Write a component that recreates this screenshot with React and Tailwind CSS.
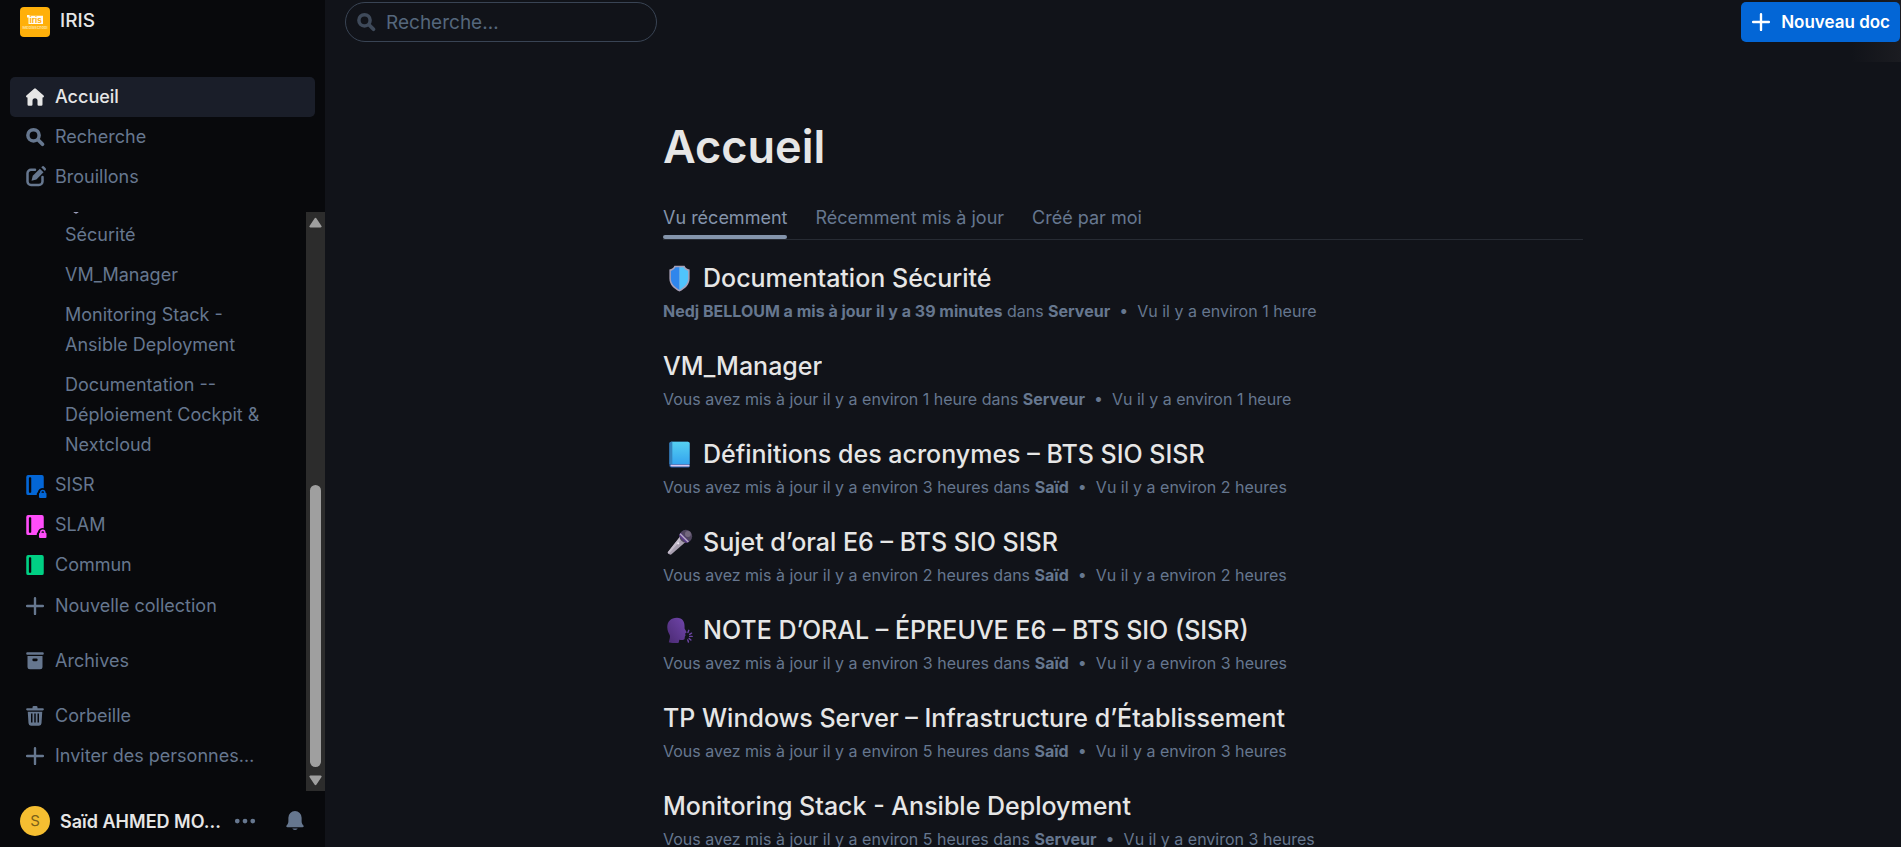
import React from "react";

function Icon({ children, className = "" }) {
  return (
    <svg viewBox="0 0 24 24" className={`h-[30px] w-[30px] shrink-0 ${className}`} fill="currentColor" aria-hidden="true">
      {children}
    </svg>
  );
}

const HomeIcon = () => (
  <Icon>
    <path d="M11.3 5.3a1 1 0 0 1 1.4 0l6.2 5.5c.6.6.2 1.6-.6 1.6H18V18a1 1 0 0 1-1 1h-2a1 1 0 0 1-1-1v-3a2 2 0 0 0-4 0v3a1 1 0 0 1-1 1H7a1 1 0 0 1-1-1v-5.6h-.3c-.8 0-1.2-1-.6-1.6z" />
  </Icon>
);

const SearchIcon = ({ className }) => (
  <Icon className={className}>
    <circle cx="10.8" cy="10.6" r="4.5" fill="none" stroke="currentColor" strokeWidth="2.8" />
    <path d="M14.6 14.4 18 17.8" stroke="currentColor" strokeWidth="3" strokeLinecap="round" />
  </Icon>
);

const DraftIcon = () => (
  <Icon>
    <path d="M12 6.200H8.800A2.800 2.800 0 0 0 6 9v6.500a2.800 2.800 0 0 0 2.800 2.800h6.400a2.800 2.800 0 0 0 2.800-2.800V12" fill="none" stroke="currentColor" strokeWidth="2" strokeLinecap="round" />
    <path d="m15.900 5.300 2.900 2.900-5.700 5.700-3.900 1.100 1-4z" />
    <path d="m17 4.200.5-.5a1.300 1.300 0 0 1 1.900 0l1 1a1.300 1.300 0 0 1 0 1.900l-.5.500z" />
  </Icon>
);

const PlusIcon = () => (
  <Icon>
    <path d="M12 5.700v12.600M5.700 12h12.600" stroke="currentColor" strokeWidth="1.900" strokeLinecap="round" />
  </Icon>
);

const ArchiveIcon = () => (
  <Icon>
    <rect x="5" y="5" width="14" height="2" rx="0.800" />
    <path fillRule="evenodd" d="M6 8h12v8.500a2 2 0 0 1-2 2H8a2 2 0 0 1-2-2zm4.800 2a.9.9 0 0 0-.9.9v.3c0 .5.400.9.900.9h2.400c.5 0 .9-.4.900-.9v-.3a.9.900 0 0 0-.9-.9z" />
  </Icon>
);

const TrashIcon = () => (
  <Icon>
    <path d="M10 5a1 1 0 0 1 1-1h2a1 1 0 0 1 1 1v.700h4.200a.9.900 0 0 1 0 1.800H5.800a.9.900 0 0 1 0-1.800H10z" />
    <path fillRule="evenodd" d="M6.200 8.500h11.600l-.6 9.300a2 2 0 0 1-2 1.900H8.800a2 2 0 0 1-2-1.900zM8.800 10v7.200h1.200V10zm2.600 0v7.200h1.200V10zm2.600 0v7.200h1.200V10z" />
  </Icon>
);

const BellIcon = () => (
  <Icon>
    <path d="M12 4a5.300 5.300 0 0 0-5.300 5.300v2.900c0 1.400-.5 2.300-1.300 3.200-.7.800-.3 1.600.6 1.600h12c.9 0 1.300-.8.600-1.600-.8-.9-1.300-1.800-1.300-3.200V9.300A5.300 5.300 0 0 0 12 4zM9.800 18h4.400a2.300 1.600 0 0 1-4.400 0z" />
  </Icon>
);

const DotsIcon = () => (
  <Icon>
    <circle cx="5.800" cy="12" r="1.900" />
    <circle cx="12" cy="12" r="1.900" />
    <circle cx="18.200" cy="12" r="1.900" />
  </Icon>
);

function CollectionIcon({ className, locked }) {
  return (
    <Icon className={className}>
      <path
        fillRule="evenodd"
        d={
          locked
            ? "M6.500 4h11A1.500 1.500 0 0 1 19 5.500v9a4.600 4.600 0 0 0-4.800 3.200c-.5.300-.8.900-.8 1.500v.8H6.500A1.500 1.500 0 0 1 5 18.500v-13A1.500 1.500 0 0 1 6.500 4zm1.300 1.800a.7.700 0 0 0-.7.700v11c0 .4.300.7.700.700h.5c.4 0 .7-.3.700-.7v-11a.7.700 0 0 0-.7-.7z"
            : "M6.500 4h11A1.500 1.500 0 0 1 19 5.500v13a1.500 1.500 0 0 1-1.500 1.500h-11A1.500 1.500 0 0 1 5 18.500v-13A1.500 1.500 0 0 1 6.500 4zm1.300 1.800a.7.700 0 0 0-.7.700v11c0 .4.300.7.700.700h.5c.4 0 .7-.3.700-.7v-11a.7.700 0 0 0-.7-.7z"
        }
      />
      {locked && (
        <>
          <rect x="15.200" y="18.200" width="6" height="4.200" rx="0.800" />
          <path d="M16.600 18.500v-.6a1.600 1.600 0 0 1 3.200 0v.6" fill="none" stroke="currentColor" strokeWidth="1.200" />
        </>
      )}
    </Icon>
  );
}

function ShieldEmoji({ className }) {
  return (
    <svg viewBox="0 0 32 32" className={className} aria-hidden="true">
      <path d="M10 1h12c1 2.600 3 4 6 4.400V16c0 7-5 12-12 15.500C9 28 4 23 4 16V5.400C7 5 9 3.600 10 1z" fill="#a7a0b8" />
      <path d="M11 2.800h5v26.700C10 26 5.800 22 5.800 16V7C8.500 6.300 10 5 11 2.800z" fill="#2f86ec" />
      <path d="M21 2.800h-5v26.700c6-3.500 10.200-7.500 10.200-13.500V7C23.500 6.300 22 5 21 2.800z" fill="#50c4fc" />
    </svg>
  );
}

function BookEmoji({ className }) {
  return (
    <svg viewBox="0 0 32 32" className={className} aria-hidden="true">
      <defs>
        <linearGradient id="book-cover" x1="0" y1="0" x2="0" y2="1">
          <stop offset="0" stopColor="#55d0f2" />
          <stop offset="1" stopColor="#35a4ee" />
        </linearGradient>
      </defs>
      <path d="M6 1h20a2 2 0 0 1 2 2v27a1.500 1.500 0 0 1-1.500 1.500H6.500A2.500 2.500 0 0 1 4 29V3a2 2 0 0 1 2-2z" fill="#2b63ae" />
      <path d="M5.500 28h22.300v2.200H6.600A1.500 1.500 0 0 1 5.500 28z" fill="#dcc8ee" />
      <path d="M6.500 1H26a2 2 0 0 1 2 2v24.300H6.500z" fill="url(#book-cover)" />
      <path d="M6 1h1.500v26.300H4V3a2 2 0 0 1 2-2z" fill="#3583bd" />
    </svg>
  );
}

function MicEmoji({ className }) {
  return (
    <svg viewBox="0 0 32 32" className={className} aria-hidden="true">
      <path d="M17 8.500 23.500 15 6.500 30c-1.500 1.300-5.500-1-4.300-2.700z" fill="#a79eaf" />
      <path d="M17 8.500 19.500 11 3.500 29c-1-.3-1.700-1-1.100-1.700z" fill="#c4bcca" />
      <circle cx="23.500" cy="8.500" r="7.500" fill="#50465f" />
      <circle cx="26" cy="6" r="3.500" fill="#73687e" />
      <path d="m17.500 4.300 10.200 10.200c-1.200 1.300-3 1.800-4.200 1.800L15.700 8.500c0-1.600.6-3.200 1.800-4.200z" fill="#5b3a8c" />
      <path d="m16.600 5.600 9.900 9.900" stroke="#b9afc4" strokeWidth="1.600" />
      <circle cx="14.500" cy="17" r="1.300" fill="#eee8f2" />
    </svg>
  );
}

function SpeakingEmoji({ className }) {
  return (
    <svg viewBox="0 0 32 32" className={className} aria-hidden="true">
      <defs>
        <linearGradient id="head-fill" x1="0" y1="1" x2="1" y2="0">
          <stop offset="0" stopColor="#4a2a72" />
          <stop offset="1" stopColor="#7146ac" />
        </linearGradient>
      </defs>
      <path d="M13 1C5.500 1 1.500 5.800 1.500 12c0 4.500 2 7.500 3 9.500.8 2-.4 5-1.200 8.500.7 1 9 1.300 11.700.5l.8-3.500c2.500.3 5.200.5 6-.6.8-1 .2-2.400.6-3.300.4-.8 1-1.500.6-2.200l-.5-1.200c1.500-.6 2.200-1.200 1.700-2.200L22 13.600C22.600 5.500 19.500 1 13 1z" fill="url(#head-fill)" />
      <path d="m26 18.500 1-2.700M28 20.500l2.300-1.300M28 23h3M27.500 25.500l2 1.800M25.800 27.200l.8 2.500" stroke="#6c45a3" strokeWidth="1.700" strokeLinecap="round" />
    </svg>
  );
}

function NavItem({ icon, label, active }) {
  return (
    <a
      href="#"
      aria-current={active ? "page" : undefined}
      className={`flex items-center gap-[5px] rounded-[5px] px-[10px] py-[5px] leading-[30px] ${
        active ? "bg-[#1a1e29] font-medium text-[#e6e6e6]" : "text-[#66778f]"
      }`}
    >
      {icon}
      <span className="truncate">{label}</span>
    </a>
  );
}

function DocLink({ children }) {
  return (
    <a href="#" className="block py-[5px] pl-[55px] pr-[40px] leading-[30px]">
      {children}
    </a>
  );
}

function Sidebar() {
  return (
    <aside className="flex w-[325px] shrink-0 flex-col bg-[#08090c] text-[18px] text-[#66778f]">
      <button type="button" className="flex items-start gap-[10px] px-5 pt-[7px] text-[19px] font-medium leading-7 text-[#e6e6e6]">
        <svg viewBox="0 0 30 30" className="h-[30px] w-[30px]" aria-hidden="true">
          <rect width="30" height="30" rx="4" fill="#ffb00a" />
          <path d="M7 8h2.500v.8H23V17H8.500v-6.500H7z" fill="#fffaf0" />
          <text x="15.600" y="15.800" textAnchor="middle" fontSize="8" fontWeight="700" fontFamily="Inter, sans-serif" fill="#ffb00a">iris</text>
          <text x="15" y="22.300" textAnchor="middle" fontSize="4" fontWeight="600" fontFamily="Inter, sans-serif" fill="#ffe3a0">MediaSchool</text>
        </svg>
        <span>IRIS</span>
      </button>

      <nav aria-label="Principal" className="px-[10px] pb-[15px] pt-10">
        <NavItem icon={<HomeIcon />} label="Accueil" active />
        <NavItem icon={<SearchIcon />} label="Recherche" />
        <NavItem icon={<DraftIcon />} label="Brouillons" />
      </nav>

      <div className="flex min-h-0 flex-1">
        <nav aria-label="Collections" className="flex min-w-0 flex-1 flex-col justify-end gap-[15px] overflow-hidden pb-[15px] pl-[10px]">
          <div className="flex flex-col gap-px">
            <div>
              <DocLink>
                <ShieldEmoji className="mr-1 inline-block h-[19px] w-[22px] align-[-3px]" />
                Documentation Sécurité
              </DocLink>
              <DocLink>VM_Manager</DocLink>
              <DocLink>Monitoring Stack - Ansible Deployment</DocLink>
              <DocLink>Documentation -- Déploiement Cockpit &amp; Nextcloud</DocLink>
              <NavItem icon={<CollectionIcon locked className="overflow-visible text-[#0366d6]" />} label="SISR" />
              <NavItem icon={<CollectionIcon locked className="overflow-visible text-[#ff4dfa]" />} label="SLAM" />
              <NavItem icon={<CollectionIcon className="text-[#00d084]" />} label="Commun" />
            </div>
            <NavItem icon={<PlusIcon />} label="Nouvelle collection" />
          </div>
          <NavItem icon={<ArchiveIcon />} label="Archives" />
          <div>
            <NavItem icon={<TrashIcon />} label="Corbeille" />
            <NavItem icon={<PlusIcon />} label="Inviter des personnes…" />
          </div>
        </nav>
        <div aria-hidden="true" className="flex w-[19px] flex-col items-center justify-between bg-[#2c2c2c] py-[5px] text-[#9f9f9f]">
          <svg viewBox="0 0 13 11" className="h-[11px] w-[13px]" fill="currentColor">
            <path d="M5.500 1.500a1.200 1.200 0 0 1 2 0l5 7.500a1 1 0 0 1-1 1.500h-10a1 1 0 0 1-1-1.500z" />
          </svg>
          <div className="flex w-[11px] flex-1 flex-col py-2">
            <div className="flex-[249_1_0%]" />
            <div className="flex-[283_1_0%] rounded-full bg-[#9f9f9f]" />
          </div>
          <svg viewBox="0 0 13 11" className="h-[11px] w-[13px]" fill="currentColor">
            <path d="M5.500 9.500a1.200 1.200 0 0 0 2 0l5-7.500a1 1 0 0 0-1-1.500h-10a1 1 0 0 0-1 1.500z" />
          </svg>
        </div>
      </div>

      <div className="flex items-center justify-between px-[15px] pb-[11px] pt-[15px]">
        <button type="button" className="flex min-w-0 items-center pl-[5px] font-semibold text-[#e6e6e6]">
          <span className="mr-[10px] flex h-[30px] w-[30px] shrink-0 items-center justify-center rounded-full bg-[#f5be31] text-[15px] font-normal text-[#7b6019]">S</span>
          <span className="w-[170px] truncate text-left">Saïd AHMED MO…</span>
          <span className="text-[#66778f]"><DotsIcon /></span>
        </button>
        <button type="button" aria-label="Notifications" className="text-[#66778f]">
          <BellIcon />
        </button>
      </div>
    </aside>
  );
}

const docs = [
  { emoji: ShieldEmoji, title: "Documentation Sécurité", bold: "Nedj BELLOUM a mis à jour il y a 39 minutes", place: "Serveur", seen: "Vu il y a environ 1 heure" },
  { title: "VM_Manager", text: "Vous avez mis à jour il y a environ 1 heure", place: "Serveur", seen: "Vu il y a environ 1 heure" },
  { emoji: BookEmoji, title: "Définitions des acronymes – BTS SIO SISR", text: "Vous avez mis à jour il y a environ 3 heures", place: "Saïd", seen: "Vu il y a environ 2 heures" },
  { emoji: MicEmoji, title: "Sujet d’oral E6 – BTS SIO SISR", text: "Vous avez mis à jour il y a environ 2 heures", place: "Saïd", seen: "Vu il y a environ 2 heures" },
  { emoji: SpeakingEmoji, title: "NOTE D’ORAL – ÉPREUVE E6 – BTS SIO (SISR)", text: "Vous avez mis à jour il y a environ 3 heures", place: "Saïd", seen: "Vu il y a environ 3 heures" },
  { title: "TP Windows Server – Infrastructure d’Établissement", text: "Vous avez mis à jour il y a environ 5 heures", place: "Saïd", seen: "Vu il y a environ 3 heures" },
  { title: "Monitoring Stack - Ansible Deployment", text: "Vous avez mis à jour il y a environ 5 heures", place: "Serveur", seen: "Vu il y a environ 3 heures" },
];

function DocRow({ doc }) {
  const Emoji = doc.emoji;
  return (
    <li>
      <a href="#" className="block h-[88px] pt-[10px]">
        <h2 className="flex h-[34px] items-center text-[25px] font-medium leading-[34px] text-[#e6e6e6]">
          {Emoji && <Emoji className="ml-[3px] mr-[10px] h-[27px] w-[27px] shrink-0" />}
          <span className="truncate">{doc.title}</span>
        </h2>
        <p className="mt-1 truncate text-[16px] leading-6 text-[#66778f]">
          {doc.bold ? <strong className="font-bold">{doc.bold}</strong> : doc.text} dans{" "}
          <strong className="font-bold">{doc.place}</strong>&nbsp; •&nbsp; {doc.seen}
        </p>
      </a>
    </li>
  );
}

export default function App() {
  return (
    <div className="flex h-screen overflow-hidden bg-[#111319] font-['Inter',sans-serif]">
      <Sidebar />
      <main className="relative flex min-w-0 flex-1 flex-col pl-5">
        <div className="absolute right-0 top-0 h-[62px] w-[50px] bg-linear-to-r from-[#111319] to-[#1b1c21]" />
        <header className="relative flex items-center justify-between pr-px pt-[2px]">
          <label className="flex h-10 w-[312px] items-center rounded-full border border-[#394454] pl-[5px]">
            <SearchIcon className="text-[#3f4a5a]" />
            <input
              type="search"
              aria-label="Recherche"
              placeholder="Recherche…"
              className="min-w-0 flex-1 bg-transparent pl-[5px] pt-[2px] text-[19px] text-[#e6e6e6] outline-none placeholder:text-[#55677c]"
            />
          </label>
          <button type="button" className="flex h-10 items-center gap-[5px] rounded-[5px] bg-[#0366d6] pl-[5px] pr-[10px] text-[17px] font-semibold text-white">
            <PlusIcon />
            <span className="pt-px">Nouveau doc</span>
          </button>
        </header>

        <div className="mx-auto w-full max-w-[920px] pt-[76px]">
          <h1 className="text-[45px] font-semibold leading-[58px] text-[#e6e6e6]">Accueil</h1>
          <div role="tablist" className="mt-[27px] flex gap-7 border-b border-[#272b33] text-[18px] leading-[30px] text-[#66778f]">
            <button type="button" role="tab" aria-selected="true" className="relative pb-[6px] text-[#8494ab]">
              Vu récemment
              <span className="absolute inset-x-0 bottom-0 h-1 rounded-[2px] bg-[#8494ab]" />
            </button>
            <button type="button" role="tab" aria-selected="false" className="pb-[6px]">Récemment mis à jour</button>
            <button type="button" role="tab" aria-selected="false" className="pb-[6px]">Créé par moi</button>
          </div>
          <ul className="pt-[11px]">
            {docs.map((doc) => (
              <DocRow key={doc.title} doc={doc} />
            ))}
          </ul>
        </div>
      </main>
    </div>
  );
}
